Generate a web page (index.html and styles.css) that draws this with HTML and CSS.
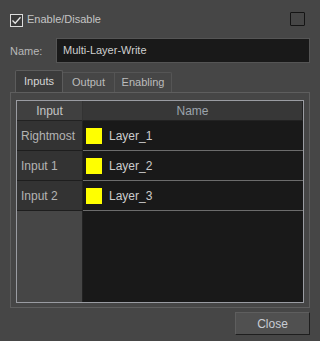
FILE: index.html
```html
<!DOCTYPE html>
<html lang="en">
<head>
    <meta charset="UTF-8">
    <meta name="viewport" content="width=device-width, initial-scale=1.0">
    <title>Multi-Layer-Write</title>
    <link rel="stylesheet" href="styles.css">
</head>
<body>

    <div class="dialog">
        <div class="top-row">
            <label class="check">
                <span class="box checked">
                    <svg width="11" height="11" viewBox="0 0 11 11">
                        <path d="M1.5 5.5 L4.2 8.2 L9.5 2.2" fill="none" stroke="#e8e8e8" stroke-width="1.3"/>
                    </svg>
                </span>
                <span>Enable/Disable</span>
            </label>
            <span class="box empty"></span>
        </div>

        <div class="name-row">
            <label class="name-label">Name:</label>
            <div class="field">Multi-Layer-Write</div>
        </div>

        <div class="tabs">
            <div class="tab active">Inputs</div>
            <div class="tab">Output</div>
            <div class="tab">Enabling</div>
        </div>

        <div class="pane">
            <div class="grid">
                <div class="head head-input">Input</div>
                <div class="head head-name">Name</div>

                <div class="side">Rightmost</div>
                <div class="cell"><span class="swatch"></span>Layer_1</div>

                <div class="side">Input 1</div>
                <div class="cell"><span class="swatch"></span>Layer_2</div>

                <div class="side">Input 2</div>
                <div class="cell"><span class="swatch"></span>Layer_3</div>

                <div class="side-fill"></div>
                <div class="cell-fill"></div>
            </div>
        </div>

        <div class="footer">
            <button class="close-btn">Close</button>
        </div>
    </div>

</body>
</html>
```

FILE: styles.css
```css
body {
    margin: 0;
    background-color: #464646;
    font-family: "Liberation Sans", Arial, sans-serif;
    font-size: 11px;
    color: #c4c4c4;
}

.dialog {
    width: 320px;
    height: 341px;
    overflow: hidden;
}

.top-row {
    display: flex;
    justify-content: space-between;
    align-items: center;
    padding: 12px 15px 0 10px;
    height: 14px;
}

.check {
    display: flex;
    align-items: center;
    gap: 4px;
}

.box {
    display: inline-block;
    box-sizing: border-box;
}

.box.checked {
    width: 13px;
    height: 13px;
    border: 1px solid #dcdcdc;
    background-color: #3a3a3a;
    position: relative;
    top: 1px;
}

.box.checked svg {
    display: block;
}

.box.empty {
    width: 15px;
    height: 14px;
    border: 1px solid #141414;
    border-radius: 1px;
}

.name-row {
    display: flex;
    align-items: center;
    margin-top: 12px;
    padding: 0 10px;
}

.name-label {
    width: 46px;
    color: #b8b8b8;
}

.field {
    flex: 1;
    box-sizing: border-box;
    height: 25px;
    line-height: 23px;
    padding-left: 6px;
    background-color: #191919;
    border: 1px solid #555;
    color: #cfcfcf;
}

.tabs {
    display: flex;
    align-items: flex-end;
    margin-top: 7px;
    padding-left: 15px;
    height: 22px;
}

.tab {
    box-sizing: border-box;
    height: 20px;
    line-height: 18px;
    padding: 0 6px;
    border: 1px solid #555;
    border-bottom: none;
    color: #bcbcbc;
    text-align: center;
}

.tab:nth-child(1) { width: 48px; }
.tab:nth-child(2) { width: 52px; border-left: none; }
.tab:nth-child(3) { width: 57px; border-left: none; border-radius: 0 2px 0 0; }

.tab.active {
    height: 22px;
    line-height: 21px;
    background-color: #3c3c3c;
    border-color: #5c5c5c;
    border-radius: 2px 2px 0 0;
    color: #d6d6d6;
}

.pane {
    margin: 0 10px;
    height: 216px;
    box-sizing: border-box;
    border: 1px solid #5e5e5e;
    padding: 7px 5px 4px 5px;
}

.grid {
    display: grid;
    grid-template-columns: 66px 1fr;
    grid-template-rows: 20px 30px 30px 30px 1fr;
    height: 203px;
    box-sizing: border-box;
    border: 1px solid #9a9ca2;
    font-size: 12px;
}

.head {
    display: flex;
    align-items: center;
    justify-content: center;
    border-bottom: 1px solid #222;
}

.head-input {
    background-color: #404040;
    color: #c4c4c4;
    border-right: 1px solid #333;
}

.head-name {
    background-color: #373737;
    color: #9ca4ac;
    border-right: 1px solid #222;
}

.side {
    display: flex;
    align-items: center;
    padding-left: 4px;
    background-color: #333;
    border-bottom: 1px solid #1e1e1e;
    border-right: 1px solid #222;
    color: #b4b4b4;
}

.cell {
    display: flex;
    align-items: center;
    padding-left: 3px;
    background-color: #191919;
    border-bottom: 1px solid #6c6c6c;
    color: #cccccc;
}

.swatch {
    width: 16px;
    height: 16px;
    margin-right: 7px;
    background-color: #ffff00;
}

.side-fill {
    background-color: #464646;
    border-right: 1px solid #222;
}

.cell-fill {
    background-color: #191919;
}

.footer {
    display: flex;
    justify-content: flex-end;
    margin-top: 4px;
    padding-right: 10px;
}

.close-btn {
    width: 75px;
    height: 23px;
    font-family: "Liberation Sans", Arial, sans-serif;
    font-size: 12px;
    color: #c8ccd4;
    background-color: #505050;
    border: 1px solid;
    border-color: #5e5e5e #1e1e1e #1e1e1e #5e5e5e;
    padding: 0;
}
```
